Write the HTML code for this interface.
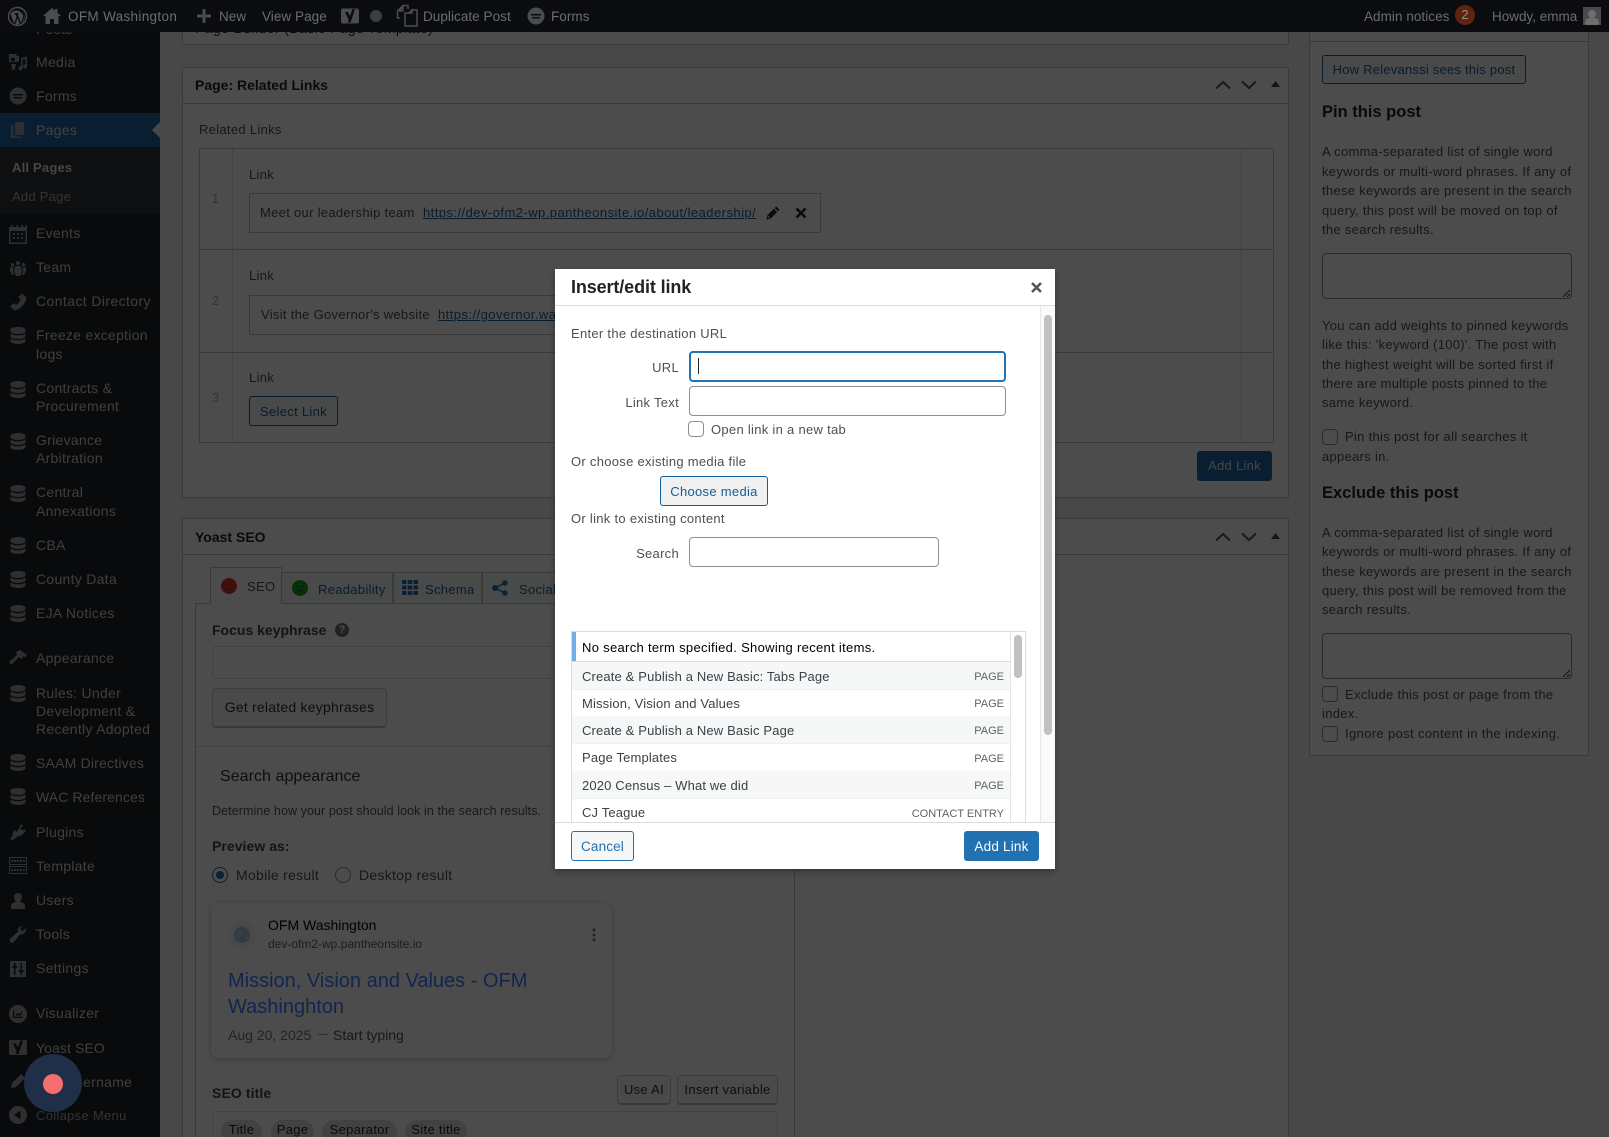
<!DOCTYPE html>
<html lang="en"><head><meta charset="utf-8"><title>Insert/edit link</title>
<style>
html,body{margin:0;padding:0;background:#f0f0f1}
#w{position:relative;width:1609px;height:1137px;overflow:hidden;background:#f0f0f1;font:13px/20px "Liberation Sans",Arial,sans-serif;letter-spacing:.3px;color:#484f56}
#w *{box-sizing:border-box}
.t{position:absolute;white-space:nowrap;line-height:20px}
.b{position:absolute;border:1px solid #c3c4c7;background:#fff}
.i{position:absolute;display:block}
#side{position:absolute;left:0;top:0;width:160px;height:1137px;background:#1d2327}
#side .t{left:36px;font-size:14px;letter-spacing:.28px;color:#d4d4d6}
#side svg{color:#9c9da0}
#ov{position:absolute;left:0;top:0;width:1609px;height:1137px;background:rgba(0,0,0,.7)}
#bar{position:absolute;left:0;top:0;width:1609px;height:32px;background:#0a0c10;color:#6c6d6f}
#bar .t{top:7px;font-size:13.5px;letter-spacing:.05px;color:#6c6d6f}
#bar svg{color:#4b4c4f}
.btn{position:absolute;border:1px solid #2271b1;border-radius:3px;background:#f6f7f7;color:#2271b1;text-align:center;white-space:nowrap}
.btnp{position:absolute;border-radius:3px;background:#2271b1;color:#fff;text-align:center;white-space:nowrap}
.cb{position:absolute;width:16px;height:16px;border:1px solid #8c8f94;border-radius:4px;background:#fff}
.in{position:absolute;border:1px solid #8c8f94;border-radius:4px;background:#fff}
.bold{font-weight:700;color:#1d2327}
.lnk{color:#1f5f94;text-decoration:underline}
.ar{color:#50575e}
#m{position:absolute;left:555px;top:269px;width:500px;height:600px;background:#fff;box-shadow:0 3px 6px rgba(0,0,0,.3);overflow:hidden;color:#4a5157}
#m .t{letter-spacing:.29px}
.row{position:absolute;left:17px;width:438px;height:28px;border-bottom:1px solid #f0f0f1}
.row.o{background:#f6f7f7}
.row span{position:absolute;line-height:27px;white-space:nowrap}
.row .a{left:10px;top:1px;color:#3a4148;letter-spacing:.15px}
.row .c{right:6px;top:2px;font-size:11px;color:#5c636a;letter-spacing:0}
.pill{position:absolute;top:1120px;height:24px;border-radius:12px;background:#dcdcde;color:#1d2327;text-align:center;line-height:19px}
</style></head><body>
<svg width="0" height="0" style="position:absolute"><defs>
<symbol id="db" viewBox="0 0 20 20"><path fill="currentColor" d="M10 1C5.600 1 2.500 2.200 2.500 3.700V5.300C2.500 6.800 5.600 8 10 8s7.500-1.200 7.500-2.700V3.700C17.500 2.200 14.400 1 10 1zM2.500 7.200v3.100C2.500 11.800 5.600 13 10 13s7.500-1.200 7.500-2.700V7.200C15.900 8.700 13 9.300 10 9.300S4.100 8.700 2.500 7.200zM2.500 12.200v3.100C2.500 16.800 5.600 18 10 18s7.500-1.200 7.500-2.700v-3.100C15.900 13.700 13 14.300 10 14.300S4.100 13.700 2.500 12.200z"/></symbol>
<symbol id="yo" viewBox="0 0 20 20"><path fill="currentColor" fill-rule="evenodd" d="M3 3h14a2 2 0 0 1 2 2v11a2 2 0 0 1-2 2H3a2 2 0 0 1-2-2V5a2 2 0 0 1 2-2zM5 6.500l3.700 8-.9 2.500h2.700L15 3.500h-2.500L10 10.500 7.800 6.500z"/></symbol>
<symbol id="gf" viewBox="0 0 20 20"><path fill="currentColor" fill-rule="evenodd" d="M10 1.500a8.500 8.500 0 1 1 0 17 8.500 8.500 0 0 1 0-17zM5 8v1.500h10V8zM6 11v1.500h8V11z"/></symbol>
</defs></svg>
<div id="w">

<!-- main content -->
<div class="b" style="left:182px;top:-10px;width:1107px;height:55px"></div>
<span class="t bold" style="left:195px;top:18px;font-size:14px;font-weight:400;letter-spacing:.4px">Page Builder (Basic Page Template)</span>

<div class="b" style="left:182px;top:67px;width:1107px;height:431px"></div>
<div style="position:absolute;left:183px;top:103px;width:1105px;height:1px;background:#c3c4c7"></div>
<span class="t bold" style="left:195px;top:75px;font-size:14px;letter-spacing:0">Page: Related Links</span>
<svg class="i ar" style="left:1214px;top:79px" width="18" height="12" viewBox="0 0 18 12"><path d="M2 9.500L9 3l7 6.500" fill="none" stroke="currentColor" stroke-width="2"/></svg>
<svg class="i ar" style="left:1240px;top:79px" width="18" height="12" viewBox="0 0 18 12"><path d="M2 2.500L9 9l7-6.500" fill="none" stroke="currentColor" stroke-width="2"/></svg>
<svg class="i" style="left:1270px;top:80px;color:#3c434a" width="11" height="8" viewBox="0 0 11 8"><path d="M5.500 1L10 7H1z" fill="currentColor"/></svg>
<span class="t" style="left:199px;top:120px">Related Links</span>

<div class="b" style="left:199px;top:148px;width:1075px;height:295px;background:#fff"></div>
<div style="position:absolute;left:200px;top:149px;width:33px;height:293px;background:#fff;border-right:1px solid #dcdcde"></div>
<div style="position:absolute;left:1241px;top:149px;width:32px;height:293px;background:#fff;border-left:1px solid #dcdcde"></div>
<div style="position:absolute;left:200px;top:249px;width:1073px;height:1px;background:#c3c4c7"></div>
<div style="position:absolute;left:200px;top:352px;width:1073px;height:1px;background:#c3c4c7"></div>
<span class="t" style="left:212px;top:189px;color:#a7aaad">1</span>
<span class="t" style="left:212px;top:291px;color:#a7aaad">2</span>
<span class="t" style="left:212px;top:388px;color:#a7aaad">3</span>
<span class="t" style="left:249px;top:165px">Link</span>
<div class="b" style="left:249px;top:193px;width:572px;height:40px;background:#fff;border-color:#c3c4c7"></div>
<span class="t" style="left:260px;top:203px">Meet our leadership team</span>
<span class="t lnk" style="left:423px;top:203px;letter-spacing:.45px">https://dev-ofm2-wp.pantheonsite.io/about/leadership/</span>
<svg class="i" style="left:765px;top:205px;color:#1d2327" width="16" height="16" viewBox="0 0 16 16"><path fill="currentColor" d="M11.200 1.500l3.300 3.300-1.500 1.500-3.300-3.300zM8.800 3.800l3.300 3.300-6.300 6.300-4.300 1.100 1-4.400zM3.300 10.600l-.5 2 2 .6z"/></svg>
<svg class="i" style="left:795px;top:207px;color:#1d2327" width="12" height="12" viewBox="0 0 12 12"><path d="M1.500 1.500l9 9M10.500 1.500l-9 9" stroke="currentColor" stroke-width="2.400"/></svg>
<span class="t" style="left:249px;top:266px">Link</span>
<div class="b" style="left:249px;top:295px;width:540px;height:40px;background:#fff"></div>
<span class="t" style="left:261px;top:305px">Visit the Governor's website</span>
<span class="t lnk" style="left:438px;top:305px;letter-spacing:.45px">https://governor.wa.gov/</span>
<span class="t" style="left:249px;top:368px">Link</span>
<div class="btn" style="left:249px;top:396px;width:89px;height:30px;line-height:29px;color:#1f5f94;border-color:#1f5f94">Select Link</div>
<div class="btnp" style="left:1197px;top:451px;width:75px;height:30px;line-height:30px;background:#2068a4;color:#e8e8e8">Add Link</div>

<!-- yoast -->
<div class="b" style="left:182px;top:518px;width:1107px;height:640px"></div>
<div style="position:absolute;left:183px;top:554px;width:1105px;height:1px;background:#c3c4c7"></div>
<span class="t bold" style="left:195px;top:527px;font-size:14px;letter-spacing:0">Yoast SEO</span>
<svg class="i ar" style="left:1214px;top:531px" width="18" height="12" viewBox="0 0 18 12"><path d="M2 9.500L9 3l7 6.500" fill="none" stroke="currentColor" stroke-width="2"/></svg>
<svg class="i ar" style="left:1240px;top:531px" width="18" height="12" viewBox="0 0 18 12"><path d="M2 2.500L9 9l7-6.500" fill="none" stroke="currentColor" stroke-width="2"/></svg>
<svg class="i" style="left:1270px;top:532px;color:#3c434a" width="11" height="8" viewBox="0 0 11 8"><path d="M5.500 1L10 7H1z" fill="currentColor"/></svg>

<div style="position:absolute;left:195px;top:603px;width:600px;height:560px;background:#fff;border:1px solid #c3c4c7"></div>
<div style="position:absolute;left:281px;top:572px;width:112px;height:31px;border:1px solid #c3c4c7;border-bottom:0;background:#f6f7f7"></div>
<div style="position:absolute;left:393px;top:572px;width:89px;height:31px;border:1px solid #c3c4c7;border-bottom:0;background:#f6f7f7"></div>
<div style="position:absolute;left:482px;top:572px;width:90px;height:31px;border:1px solid #c3c4c7;border-bottom:0;background:#f6f7f7"></div>
<div style="position:absolute;left:210px;top:567px;width:72px;height:37px;border:1px solid #c3c4c7;border-bottom:0;background:#fff"></div>
<svg class="i" style="left:221px;top:578px" width="16" height="16" viewBox="0 0 16 16"><circle cx="8" cy="8" r="8" fill="#dc3232"/><circle cx="5.500" cy="6.500" r=".9" fill="#8a1f1f"/><circle cx="10.500" cy="6.500" r=".9" fill="#8a1f1f"/><path d="M5 11.500c1.500-1.500 4.500-1.500 6 0" fill="none" stroke="#8a1f1f"/></svg>
<span class="t" style="left:247px;top:577px;font-size:13px">SEO</span>
<svg class="i" style="left:292px;top:580px" width="16" height="16" viewBox="0 0 16 16"><circle cx="8" cy="8" r="8" fill="#1f9a1f"/><circle cx="5.500" cy="6.500" r=".9" fill="#0f5f0f"/><circle cx="10.500" cy="6.500" r=".9" fill="#0f5f0f"/><path d="M5 10c1.500 1.500 4.500 1.500 6 0" fill="none" stroke="#0f5f0f"/></svg>
<span class="t" style="left:318px;top:580px;color:#1f5f94;font-size:13px">Readability</span>
<svg class="i" style="left:402px;top:580px;color:#2271b1" width="16" height="15" viewBox="0 0 16 15"><path fill="currentColor" d="M0 0h4.500v4H0zM5.700 0h4.600v4H5.700zM11.500 0H16v4h-4.500zM0 5.500h4.500v4H0zM5.700 5.500h4.600v4H5.700zM11.500 5.500H16v4h-4.500zM0 11h4.500v4H0zM5.700 11h4.600v4H5.700zM11.500 11H16v4h-4.500z"/></svg>
<span class="t" style="left:425px;top:580px;color:#1f5f94;font-size:13px">Schema</span>
<svg class="i" style="left:492px;top:580px;color:#2271b1" width="16" height="16" viewBox="0 0 16 16"><circle cx="13" cy="3" r="2.700" fill="currentColor"/><circle cx="13" cy="13" r="2.700" fill="currentColor"/><circle cx="3" cy="8" r="3" fill="currentColor"/><path d="M13 3L3 8l10 5" fill="none" stroke="currentColor" stroke-width="1.500"/></svg>
<span class="t" style="left:519px;top:580px;color:#1f5f94;font-size:13px">Social</span>

<span class="t bold" style="left:212px;top:620px;font-size:14px;color:#3c434a;letter-spacing:0">Focus keyphrase</span>
<div class="i" style="left:335px;top:623px;width:14px;height:14px;border-radius:50%;background:#707070;color:#fff;font-size:11px;line-height:14px;text-align:center;font-weight:700;letter-spacing:0">?</div>
<div class="in" style="left:212px;top:646px;width:575px;height:33px;border-color:#ddd"></div>
<div class="i" style="left:212px;top:688px;width:175px;height:40px;border:1px solid #ccc;border-bottom:2px solid #bbb;border-radius:4px;background:#f7f7f7;color:#303030;text-align:center;line-height:36px;font-size:14px;letter-spacing:.22px">Get related keyphrases</div>
<div style="position:absolute;left:196px;top:746px;width:598px;height:1px;background:#ddd"></div>
<span class="t" style="left:220px;top:767px;font-size:16px;letter-spacing:.05px;color:#303030">Search appearance</span>
<span class="t" style="left:212px;top:801px;font-size:12.500px;color:#555;letter-spacing:.08px">Determine how your post should look in the search results.</span>
<span class="t bold" style="left:212px;top:836px;font-size:14px;color:#3c434a;letter-spacing:.05px">Preview as:</span>
<div class="i" style="left:212px;top:867px;width:16px;height:16px;border-radius:50%;border:1px solid #2271b1;background:#fff"></div>
<div class="i" style="left:216px;top:871px;width:8px;height:8px;border-radius:50%;background:#2271b1"></div>
<span class="t" style="left:236px;top:865px;font-size:14px;letter-spacing:.28px">Mobile result</span>
<div class="i" style="left:335px;top:867px;width:16px;height:16px;border-radius:50%;border:1px solid #8c8f94;background:#fff"></div>
<span class="t" style="left:359px;top:865px;font-size:14px;letter-spacing:.28px">Desktop result</span>

<div class="i" style="left:211px;top:903px;width:401px;height:155px;border-radius:8px;background:#fff;box-shadow:0 1px 6px rgba(32,33,36,.28)"></div>
<div class="i" style="left:228px;top:921px;width:28px;height:28px;border-radius:50%;background:#f1f3f4"></div>
<svg class="i" style="left:233px;top:926px" width="18" height="18" viewBox="0 0 18 18"><circle cx="9" cy="9" r="8" fill="#a7c1dd"/><path d="M5 4l4 2 1 3-3 1-1 4-2-4zM12 11l2-1 1 1-3 4z" fill="#c9d6e4"/></svg>
<span class="t" style="left:268px;top:915px;font-size:14px;letter-spacing:0;color:#000">OFM Washington</span>
<span class="t" style="left:268px;top:934px;font-size:12px;letter-spacing:0;color:#5f6368">dev-ofm2-wp.pantheonsite.io</span>
<svg class="i" style="left:591px;top:928px;color:#70757a" width="6" height="14" viewBox="0 0 6 14"><circle cx="3" cy="2" r="1.500" fill="currentColor"/><circle cx="3" cy="7" r="1.500" fill="currentColor"/><circle cx="3" cy="12" r="1.500" fill="currentColor"/></svg>
<span class="t" style="left:228px;top:1025px;font-size:14px;letter-spacing:0;color:#70757a">Aug 20, 2025</span>
<span class="t" style="left:318px;top:1025px;font-size:10px;letter-spacing:0;color:#70757a">—</span>
<span class="t" style="left:333px;top:1025px;font-size:14px;letter-spacing:0;color:#4d5156">Start typing</span>

<span class="t bold" style="left:212px;top:1083px;font-size:14px;color:#3c434a;letter-spacing:.1px">SEO title</span>
<div class="i" style="left:617px;top:1075px;width:54px;height:30px;border:1px solid #ccc;border-bottom:2px solid #bbb;border-radius:3px;background:#f7f7f7;text-align:center;line-height:27px;color:#303030">Use AI</div>
<div class="i" style="left:677px;top:1075px;width:101px;height:30px;border:1px solid #ccc;border-bottom:2px solid #bbb;border-radius:3px;background:#f7f7f7;text-align:center;line-height:27px;color:#303030">Insert variable</div>
<div class="in" style="left:212px;top:1111px;width:566px;height:40px;border-color:#ddd"></div>
<div class="pill" style="left:221px;width:41px">Title</div>
<div class="pill" style="left:271px;width:43px">Page</div>
<div class="pill" style="left:322px;width:75px">Separator</div>
<div class="pill" style="left:405px;width:62px">Site title</div>

<!-- right column -->
<div class="b" style="left:1309px;top:-10px;width:280px;height:766px"></div>
<div style="position:absolute;left:1310px;top:41px;width:278px;height:1px;background:#c3c4c7"></div>
<div class="btn" style="left:1322px;top:55px;width:204px;height:29px;line-height:28px;letter-spacing:.22px;color:#1f5f94;border-color:#1f5f94">How Relevanssi sees this post</div>
<span class="t bold" style="left:1322px;top:102px;font-size:16.500px;letter-spacing:0">Pin this post</span>
<span class="t" style="left:1322px;top:142px">A comma-separated list of single word</span>
<span class="t" style="left:1322px;top:162px">keywords or multi-word phrases. If any of</span>
<span class="t" style="left:1322px;top:181px">these keywords are present in the search</span>
<span class="t" style="left:1322px;top:201px">query, this post will be moved on top of</span>
<span class="t" style="left:1322px;top:220px">the search results.</span>
<div class="in" style="left:1322px;top:253px;width:250px;height:46px"></div>
<svg class="i" style="left:1562px;top:289px;color:#3c434a" width="9" height="9" viewBox="0 0 9 9"><path d="M8 1L1 8M8 5L5 8" stroke="currentColor"/></svg>
<span class="t" style="left:1322px;top:316px">You can add weights to pinned keywords</span>
<span class="t" style="left:1322px;top:335px">like this: 'keyword (100)'. The post with</span>
<span class="t" style="left:1322px;top:355px">the highest weight will be sorted first if</span>
<span class="t" style="left:1322px;top:374px">there are multiple posts pinned to the</span>
<span class="t" style="left:1322px;top:393px">same keyword.</span>
<div class="cb" style="left:1322px;top:429px"></div>
<span class="t" style="left:1345px;top:427px">Pin this post for all searches it</span>
<span class="t" style="left:1322px;top:447px">appears in.</span>
<span class="t bold" style="left:1322px;top:483px;font-size:16.500px;letter-spacing:0">Exclude this post</span>
<span class="t" style="left:1322px;top:523px">A comma-separated list of single word</span>
<span class="t" style="left:1322px;top:542px">keywords or multi-word phrases. If any of</span>
<span class="t" style="left:1322px;top:562px">these keywords are present in the search</span>
<span class="t" style="left:1322px;top:581px">query, this post will be removed from the</span>
<span class="t" style="left:1322px;top:600px">search results.</span>
<div class="in" style="left:1322px;top:633px;width:250px;height:46px"></div>
<svg class="i" style="left:1562px;top:669px;color:#3c434a" width="9" height="9" viewBox="0 0 9 9"><path d="M8 1L1 8M8 5L5 8" stroke="currentColor"/></svg>
<div class="cb" style="left:1322px;top:686px"></div>
<span class="t" style="left:1345px;top:685px;letter-spacing:.33px">Exclude this post or page from the</span>
<span class="t" style="left:1322px;top:704px">index.</span>
<div class="cb" style="left:1322px;top:726px"></div>
<span class="t" style="left:1345px;top:724px;letter-spacing:.36px">Ignore post content in the indexing.</span>

<!-- sidebar -->
<div id="side">
<div style="position:absolute;left:0;top:113px;width:160px;height:34px;background:#1f64a0"></div>
<div style="position:absolute;left:0;top:147px;width:160px;height:68px;background:#2c3338"></div>
<svg class="i" style="left:152px;top:122px" width="8" height="16" viewBox="0 0 8 16"><path d="M8 0L0 8l8 8z" fill="#f0f0f1"/></svg>

<span class="t" style="top:19px">Posts</span>
<svg class="i" style="left:8px;top:52px" width="20" height="20" viewBox="0 0 20 20"><path fill="currentColor" d="M1 2h7l1 2h2v6H1zM5 5.500a2 2 0 1 0 0 4 2 2 0 0 0 0-4zM13 6l6-1.500v10a2 2 0 1 1-1.500-2V7l-3 .7v8.800a2 2 0 1 1-1.500-2zM3 12h5l-1.500 6H4.500z"/></svg>
<span class="t" style="top:52px">Media</span>
<svg class="i" style="left:8px;top:86px" width="20" height="20"><use href="#gf"/></svg>
<span class="t" style="top:86px">Forms</span>
<svg class="i" style="left:8px;top:120px" width="20" height="20" viewBox="0 0 20 20"><path fill="currentColor" d="M7 2h9v13H7zM3 5h2.500v11.500H13V18H3z"/></svg>
<span class="t" style="top:120px;color:#e0e0e2">Pages</span>
<span class="t" style="left:12px;top:158px;font-size:13px;font-weight:700;color:#e6e6e8;letter-spacing:.2px">All Pages</span>
<span class="t" style="left:12px;top:187px;font-size:13px;color:#aaacaf;letter-spacing:.25px">Add Page</span>

<svg class="i" style="left:8px;top:224px" width="20" height="20" viewBox="0 0 20 20"><path fill="currentColor" fill-rule="evenodd" d="M1 3h2V1h1.500v2h4V1H10v2h3.500V1H15v2h2.500V1H19v2h0v17H1zM2.500 7v11.500h15V7zM5 9h2v2H5zM9 9h2v2H9zM13 9h2v2h-2zM5 13h2v2H5zM9 13h2v2H9zM13 13h2v2h-2z"/></svg>
<span class="t" style="top:223px">Events</span>
<svg class="i" style="left:8px;top:258px" width="20" height="20" viewBox="0 0 20 20"><path fill="currentColor" d="M10 3a2 2 0 1 1 0 4 2 2 0 0 1 0-4zM4.500 5a1.800 1.800 0 1 1 0 3.600 1.800 1.800 0 0 1 0-3.600zM15.500 5a1.800 1.800 0 1 1 0 3.600 1.800 1.800 0 0 1 0-3.600zM7 8h6l1 6-2 4H8l-2-4zM2 9.500h3.500L5 14l1 3H4l-2-4zM14.500 9.500H18v3.500l-2 4h-2l1-3z"/></svg>
<span class="t" style="top:257px">Team</span>
<svg class="i" style="left:8px;top:292px" width="20" height="20" viewBox="0 0 20 20"><path fill="currentColor" d="M14 1.500l4.500 4c-.5 6-6 12-12 13L2 14.500l4-3.500 2 2c2-1 4-3.500 4.500-5.500L10.500 5z"/></svg>
<span class="t" style="top:291px;letter-spacing:.4px">Contact Directory</span>
<svg class="i" style="left:8px;top:326px" width="20" height="20"><use href="#db"/></svg>
<span class="t" style="top:325px">Freeze exception</span><span class="t" style="top:344px">logs</span>
<svg class="i" style="left:8px;top:380px" width="20" height="20"><use href="#db"/></svg>
<span class="t" style="top:378px">Contracts &amp;</span><span class="t" style="top:396px">Procurement</span>
<svg class="i" style="left:8px;top:432px" width="20" height="20"><use href="#db"/></svg>
<span class="t" style="top:430px">Grievance</span><span class="t" style="top:448px">Arbitration</span>
<svg class="i" style="left:8px;top:484px" width="20" height="20"><use href="#db"/></svg>
<span class="t" style="top:482px">Central</span><span class="t" style="top:501px">Annexations</span>
<svg class="i" style="left:8px;top:536px" width="20" height="20"><use href="#db"/></svg>
<span class="t" style="top:535px">CBA</span>
<svg class="i" style="left:8px;top:570px" width="20" height="20"><use href="#db"/></svg>
<span class="t" style="top:569px">County Data</span>
<svg class="i" style="left:8px;top:604px" width="20" height="20"><use href="#db"/></svg>
<span class="t" style="top:603px">EJA Notices</span>
<svg class="i" style="left:8px;top:648px" width="20" height="20" viewBox="0 0 20 20"><path fill="currentColor" d="M12 2l7 5-2 2-2-1-1 3-3-2-8 8-2-3 8-7-1-3z"/></svg>
<span class="t" style="top:648px">Appearance</span>
<svg class="i" style="left:8px;top:684px" width="20" height="20"><use href="#db"/></svg>
<span class="t" style="top:683px">Rules: Under</span><span class="t" style="top:701px">Development &amp;</span><span class="t" style="top:719px">Recently Adopted</span>
<svg class="i" style="left:8px;top:753px" width="20" height="20"><use href="#db"/></svg>
<span class="t" style="top:753px;letter-spacing:.2px">SAAM Directives</span>
<svg class="i" style="left:8px;top:787px" width="20" height="20"><use href="#db"/></svg>
<span class="t" style="top:787px;letter-spacing:.1px">WAC References</span>
<svg class="i" style="left:8px;top:822px" width="20" height="20" viewBox="0 0 20 20"><path fill="currentColor" d="M13 2l2 1.500-3 3.500 3 1-2 1 4-1.500 1 2-3 2c-1 2-3 3-5 2.500L5 18H3l-.5-1.500L5 13c-.5-2 0-3.500 1-5l3 2z"/></svg>
<span class="t" style="top:822px">Plugins</span>
<svg class="i" style="left:9px;top:857px" width="20" height="18" viewBox="0 0 20 18" fill="none" stroke="currentColor"><rect x=".5" y=".5" width="17" height="7"/><rect x=".5" y="9.500" width="17" height="7"/><path d="M2 4h14M2 13h14" stroke-width="2" stroke-dasharray="2 1"/></svg>
<span class="t" style="top:856px">Template</span>
<svg class="i" style="left:8px;top:891px" width="20" height="20" viewBox="0 0 20 20"><path fill="currentColor" d="M10 2a4 4 0 0 1 4 4c0 2-1 3.500-2 4.500l4 2c1 .5 1 1.500 1 5.500H3c0-4 0-5 1-5.500l4-2C7 9.500 6 8 6 6a4 4 0 0 1 4-4z"/></svg>
<span class="t" style="top:890px">Users</span>
<svg class="i" style="left:8px;top:925px" width="20" height="20" viewBox="0 0 20 20"><path fill="currentColor" d="M18 3l-3 3-2-1-1-2 3-2c-3-.5-6 2-5 5.500L2 14c-1.500 2 1.500 5 3.500 3.500L12 9.500c3.500 1 6.500-2.500 6-6.500z"/></svg>
<span class="t" style="top:924px">Tools</span>
<svg class="i" style="left:8px;top:959px" width="20" height="20" viewBox="0 0 20 20"><path fill="currentColor" fill-rule="evenodd" d="M2 2h16v16H2zM6 4v3H4.500v2H6v7h1.500V9H9V7H7.500V4zM12.500 4v7H11v2h1.500v3H14v-3h1.500v-2H14V4z"/></svg>
<span class="t" style="top:958px">Settings</span>
<svg class="i" style="left:8px;top:1004px" width="20" height="20" viewBox="0 0 20 20"><path fill="currentColor" fill-rule="evenodd" d="M10 1a9 9 0 1 1 0 18 9 9 0 0 1 0-18zM5 6v8h10v-1.300H6.200V6zM7.500 11.500l2-2.500 2 1.300L14 7v2.500l-2.300 2.500-2-1.300-1.200 1z"/></svg>
<span class="t" style="top:1003px">Visualizer</span>
<svg class="i" style="left:8px;top:1037px" width="20" height="20"><use href="#yo"/></svg>
<span class="t" style="top:1038px;letter-spacing:.1px">Yoast SEO</span>
<svg class="i" style="left:9px;top:1072px" width="18" height="18" viewBox="0 0 18 18"><path fill="currentColor" d="M12 2l4 4-9 9-5 1 1-5z"/></svg>
<span class="t" style="top:1072px">Edit Username</span>
<svg class="i" style="left:8px;top:1105px" width="20" height="20" viewBox="0 0 20 20"><path fill="currentColor" fill-rule="evenodd" d="M10 1a9 9 0 1 1 0 18 9 9 0 0 1 0-18zM12.500 5.500L6 10l6.500 4.500z"/></svg>
<span class="t" style="top:1106px;font-size:13px;letter-spacing:.3px;color:#aaacaf">Collapse Menu</span>
</div>

<div id="ov"></div>

<!-- search preview title -->
<span class="t" style="left:228px;top:968px;font-size:20px;line-height:26px;letter-spacing:0;color:#11264f">Mission, Vision and Values - OFM</span>
<span class="t" style="left:228px;top:994px;font-size:20px;line-height:26px;letter-spacing:0;color:#11264f">Washinghton</span>

<!-- admin bar -->
<div id="bar">
<svg class="i" style="left:7px;top:6px" width="21" height="21" viewBox="0 0 21 21"><circle cx="10.500" cy="10.500" r="9" fill="none" stroke="currentColor" stroke-width="1.400"/><path fill="currentColor" d="M3.500 8l3.700 9.700 2.300-6.700-1.200-3-1-.1V7h4.500v.9l-1.100.1 3.300 9.300 2-6.600c.4-1.500-.3-2.700-1.400-3.700l-1.500-1.200c-2.800-2-7.700-1.500-9.600 2.200zM10.600 12l-2.100 6.200c1.300.4 2.800.4 4.200-.1zM17.300 8c.4 2.500-.3 4.500-1.500 7.500l-1.300 2c2.500-1.700 4-5.500 2.800-9.500z"/></svg>
<svg class="i" style="left:42px;top:6px" width="20" height="20" viewBox="0 0 20 20"><path fill="currentColor" fill-rule="evenodd" d="M10 2l3 2.700V3h2.500v3.900L19 10h-2.500v8H12v-5H8v5H3.500v-8H1z"/></svg>
<span class="t" style="left:68px;letter-spacing:.33px">OFM Washington</span>
<svg class="i" style="left:197px;top:9px" width="14" height="14" viewBox="0 0 14 14"><path d="M7 0v14M0 7h14" stroke="currentColor" stroke-width="3"/></svg>
<span class="t" style="left:219px">New</span>
<span class="t" style="left:262px">View Page</span>
<svg class="i" style="left:340px;top:5px" width="20" height="21"><use href="#yo"/></svg>
<div class="i" style="left:370px;top:10px;width:12px;height:12px;border-radius:50%;background:#3c3d40"></div>
<svg class="i" style="left:396px;top:4px" width="22" height="24" viewBox="0 0 22 24" fill="none" stroke="currentColor" stroke-width="1.500"><path d="M4 14H1.500V7L7 1.500h5V5M4 7l3-5.500V7z"/><path d="M9 9h4l3-3h5v16H9z"/><path d="M13 9l3-3v3z"/></svg>
<span class="t" style="left:423px">Duplicate Post</span>
<svg class="i" style="left:526px;top:6px" width="20" height="20"><use href="#gf"/></svg>
<span class="t" style="left:551px">Forms</span>
<span class="t" style="left:1364px">Admin notices</span>
<div class="i" style="left:1455px;top:5px;width:20px;height:20px;border-radius:50%;background:#5e2410;color:#8f8f8f;text-align:center;line-height:19px;font-size:13px;letter-spacing:0">2</div>
<span class="t" style="left:1492px;letter-spacing:0">Howdy, emma</span>
<div class="i" style="left:1583px;top:7px;width:18px;height:18px;background:#4a4a4a;overflow:hidden"><div style="position:absolute;left:5px;top:3px;width:8px;height:8px;border-radius:50%;background:#6e6e6e"></div><div style="position:absolute;left:2px;top:11px;width:14px;height:9px;border-radius:5px;background:#6e6e6e"></div></div>
</div>

<!-- modal -->
<div id="m">
<span class="t" style="left:16px;top:8px;font-size:18px;font-weight:700;letter-spacing:-.12px;color:#1d2327">Insert/edit link</span>
<svg class="i" style="left:476px;top:13px;color:#50575e" width="11" height="11" viewBox="0 0 11 11"><path d="M1 1l9 9M10 1l-9 9" stroke="currentColor" stroke-width="2.600"/></svg>
<div style="position:absolute;left:0;top:36px;width:500px;height:1px;background:#dcdcde"></div>

<span class="t" style="left:16px;top:55px">Enter the destination URL</span>
<span class="t" style="right:376px;top:89px">URL</span>
<div class="in" style="left:134px;top:82px;width:317px;height:31px;border:2px solid #2271b1"></div>
<div style="position:absolute;left:143px;top:89px;width:1px;height:16px;background:#1d2327"></div>
<span class="t" style="right:376px;top:124px">Link Text</span>
<div class="in" style="left:134px;top:117px;width:317px;height:30px"></div>
<div class="cb" style="left:133px;top:152px"></div>
<span class="t" style="left:156px;top:151px">Open link in a new tab</span>
<span class="t" style="left:16px;top:183px">Or choose existing media file</span>
<div class="btn" style="left:105px;top:207px;width:108px;height:30px;line-height:29px;background:#f0f0f1;color:#135e96;border-color:#135e96;letter-spacing:.3px">Choose media</div>
<span class="t" style="left:16px;top:240px">Or link to existing content</span>
<span class="t" style="right:376px;top:275px">Search</span>
<div class="in" style="left:134px;top:268px;width:250px;height:30px"></div>

<div style="position:absolute;left:16px;top:362px;width:455px;height:200px;border:1px solid #dcdcde;background:#fff"></div>
<div style="position:absolute;left:17px;top:363px;width:4px;height:30px;background:#72aee6"></div>
<span class="t" style="left:27px;top:369px;color:#000;letter-spacing:.31px">No search term specified. Showing recent items.</span>
<div style="position:absolute;left:17px;top:392px;width:438px;height:1px;background:#dcdcde"></div>
<div class="row o" style="top:393px"><span class="a">Create &amp; Publish a New Basic: Tabs Page</span><span class="c">PAGE</span></div>
<div class="row" style="top:420px"><span class="a">Mission, Vision and Values</span><span class="c">PAGE</span></div>
<div class="row o" style="top:447px"><span class="a">Create &amp; Publish a New Basic Page</span><span class="c">PAGE</span></div>
<div class="row" style="top:475px"><span class="a" style="top:0">Page Templates</span><span class="c">PAGE</span></div>
<div class="row o" style="top:502px"><span class="a">2020 Census – What we did</span><span class="c">PAGE</span></div>
<div class="row" style="top:530px"><span class="a" style="top:0">CJ Teague</span><span class="c">CONTACT ENTRY</span></div>
<div style="position:absolute;left:455px;top:363px;width:1px;height:190px;background:#e5e5e5"></div>
<div style="position:absolute;left:459px;top:366px;width:8px;height:43px;border-radius:4px;background:#c1c1c1"></div>

<div style="position:absolute;left:485px;top:37px;width:15px;height:516px;background:#fafafa;border-left:1px solid #e8e8e8"></div>
<div style="position:absolute;left:489px;top:46px;width:8px;height:420px;border-radius:4px;background:#c1c1c1"></div>

<div style="position:absolute;left:0;top:553px;width:500px;height:47px;background:#fff;border-top:1px solid #dcdcde"></div>
<div class="btn" style="left:16px;top:562px;width:63px;height:30px;line-height:29px;font-size:13.500px;letter-spacing:.15px">Cancel</div>
<div class="btnp" style="left:409px;top:562px;width:75px;height:30px;line-height:31px;font-size:13.500px;letter-spacing:.2px">Add Link</div>
</div>

<!-- recorder bubble -->
<div class="i" style="left:24px;top:1054px;width:58px;height:58px;border-radius:50%;background:#1f2f47"></div>
<div class="i" style="left:43px;top:1074px;width:20px;height:20px;border-radius:50%;background:#f56d6d"></div>
</div>
</body></html>
